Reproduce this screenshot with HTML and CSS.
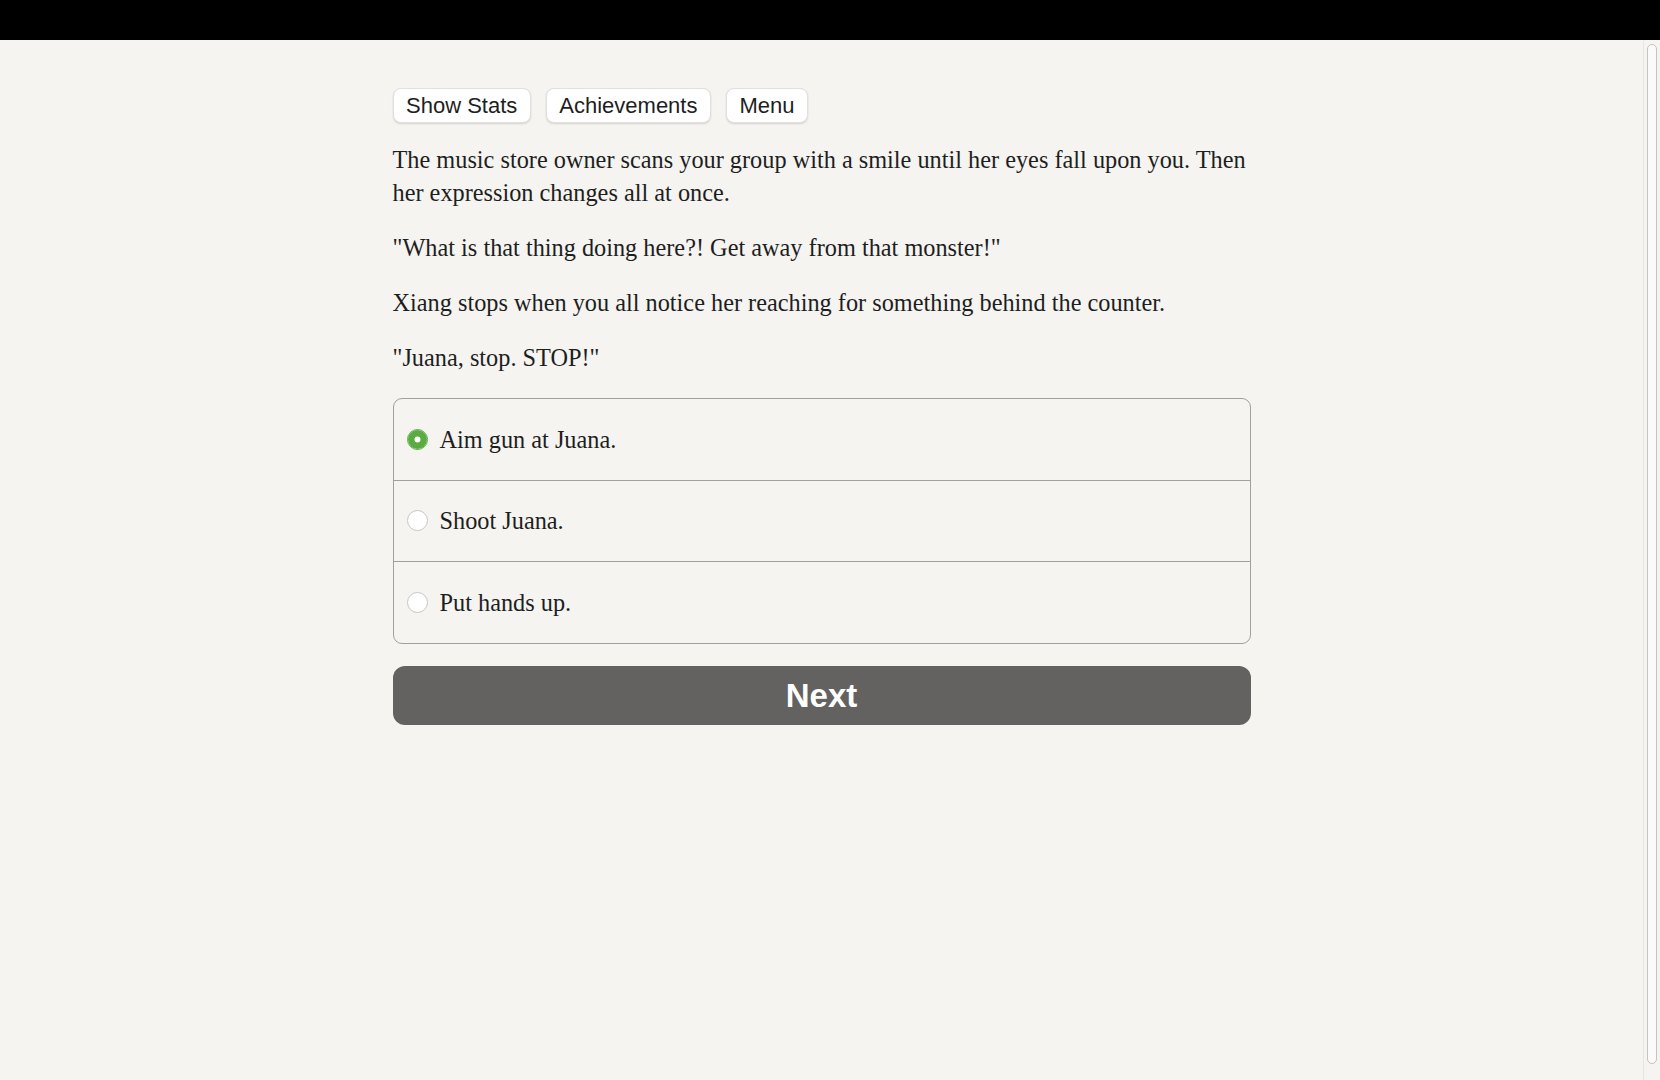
FILE: index.html
```html
<!DOCTYPE html>
<html lang="en">
<head>
<meta charset="utf-8">
<title>Story</title>
<link rel="stylesheet" href="styles.css">
</head>
<body>
<div class="topbar"></div>
<div class="viewport">
  <main class="main">
    <div class="toolbar">
      <button class="tool-btn" type="button">Show Stats</button>
      <button class="tool-btn" type="button">Achievements</button>
      <button class="tool-btn" type="button">Menu</button>
    </div>
    <div class="story">
      <p>The music store owner scans your group with a smile until her eyes fall upon you. Then her expression changes all at once.</p>
      <p>"What is that thing doing here?! Get away from that monster!"</p>
      <p>Xiang stops when you all notice her reaching for something behind the counter.</p>
      <p>"Juana, stop. STOP!"</p>
    </div>
    <form class="choices">
      <label class="choice">
        <input type="radio" name="choice" checked>
        <span class="radio"></span>
        <span class="choice-text">Aim gun at Juana.</span>
      </label>
      <label class="choice">
        <input type="radio" name="choice">
        <span class="radio"></span>
        <span class="choice-text">Shoot Juana.</span>
      </label>
      <label class="choice">
        <input type="radio" name="choice">
        <span class="radio"></span>
        <span class="choice-text">Put hands up.</span>
      </label>
    </form>
    <button class="next-btn" type="button">Next</button>
  </main>
  <div class="scrollbar"><div class="thumb"></div></div>
</div>
</body>
</html>
```
FILE: styles.css
```css
html, body {
  margin: 0;
  padding: 0;
  background: #f5f4f0;
}
body {
  font-family: "Liberation Serif", "Times New Roman", serif;
  color: #1e1e1e;
  overflow: hidden;
}
.topbar {
  height: 40px;
  background: #000;
}
.viewport {
  position: relative;
  height: 1040px;
  padding-right: 17px;
  box-sizing: border-box;
  overflow: hidden;
}
.main {
  width: 858px;
  margin: 0 auto;
  padding-top: 48px;
}
.toolbar {
  display: flex;
  gap: 15px;
}
.tool-btn {
  font-family: "Liberation Sans", Arial, sans-serif;
  font-size: 22px;
  line-height: 23px;
  color: #1e1e1e;
  background: #fff;
  border: 1px solid #e0e0de;
  border-radius: 8px;
  padding: 5px 12.5px;
  box-shadow: 0 1px 2px rgba(0, 0, 0, 0.14);
  cursor: pointer;
}
.story p {
  font-size: 24.3px;
  line-height: 33px;
  margin: 22px 0;
}
.story p:first-child {
  margin-top: 20px;
}
.choices {
  margin: 24px 0 0;
  border: 1px solid #a0a09e;
  border-radius: 9px;
  overflow: hidden;
}
.choice {
  display: flex;
  align-items: center;
  height: 80.5px;
  padding: 0 13px;
  cursor: pointer;
}
.choice + .choice {
  border-top: 1px solid #a0a09e;
}
.choice input {
  display: none;
}
.radio {
  width: 19px;
  height: 19px;
  border-radius: 50%;
  background: #fff;
  border: 1px solid #c6c6c4;
  flex: none;
  margin-right: 12px;
  box-sizing: content-box;
}
.choice input:checked + .radio {
  border-color: #5aab41;
  background: #fff;
  box-shadow: inset 0 0 0 6.5px #5aab41;
}
.choice-text {
  font-size: 24.3px;
  line-height: 33px;
}
.next-btn {
  display: block;
  width: 100%;
  height: 59px;
  margin-top: 22px;
  background: #636260;
  color: #fff;
  border: none;
  border-radius: 12px;
  font-family: "Liberation Sans", Arial, sans-serif;
  font-weight: bold;
  font-size: 33px;
  padding-top: 3px;
  cursor: pointer;
}
.scrollbar {
  position: absolute;
  top: 0;
  right: 0;
  bottom: 0;
  width: 16px;
  background: #f5f4f0;
  border-left: 1px solid #e6e5e1;
}
.thumb {
  position: absolute;
  top: 4px;
  bottom: 16px;
  left: 3px;
  width: 8px;
  border: 1px solid #c4c4c2;
  border-radius: 6px;
  background: #fafaf8;
}
```
